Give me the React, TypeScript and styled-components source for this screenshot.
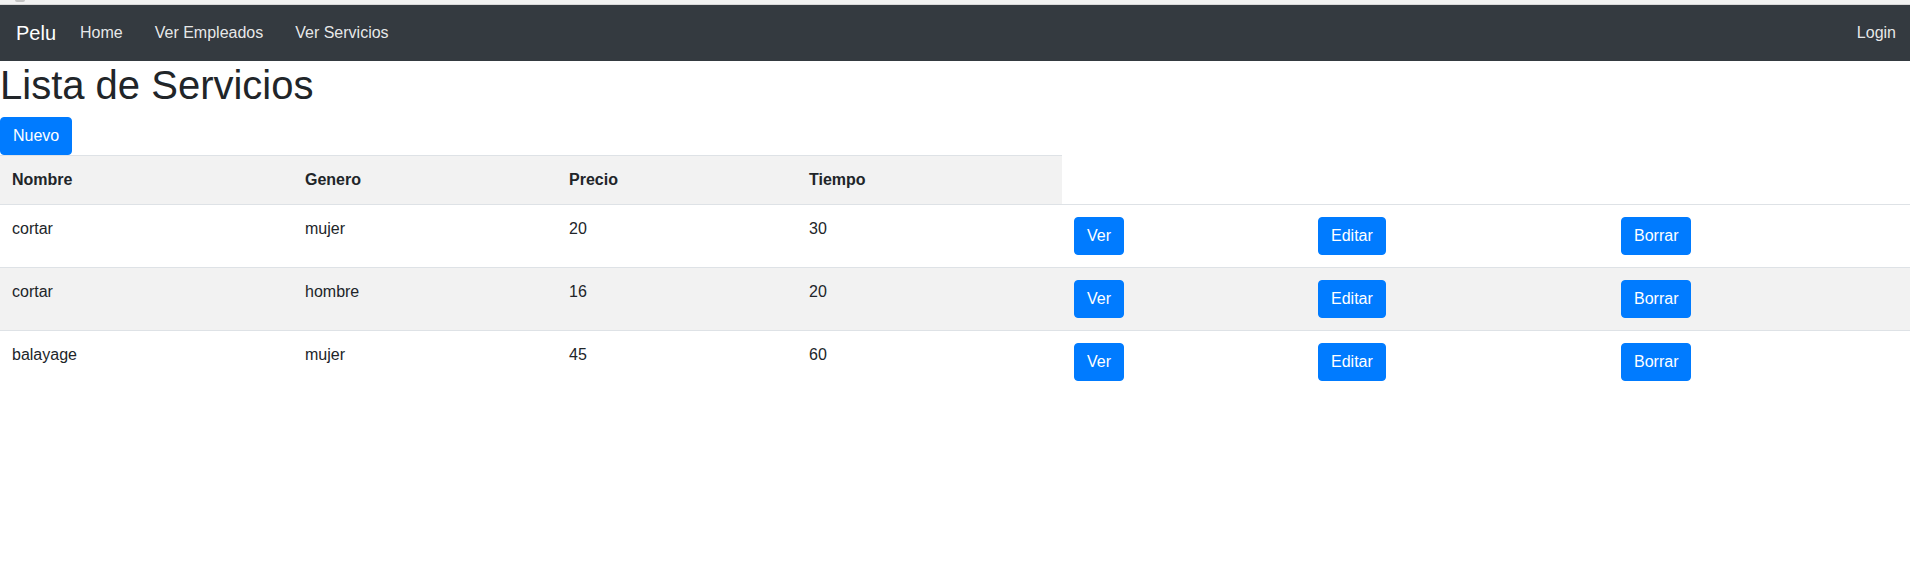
import React from "react";
import styled, { createGlobalStyle } from "styled-components";

const GlobalStyle = createGlobalStyle`
  html, body {
    margin: 0;
    padding: 0;
    background: #ffffff;
  }
  body {
    font-family: "Liberation Sans", Arial, Helvetica, sans-serif;
    font-size: 16px;
    line-height: 1.5;
    color: #212529;
  }
  * { box-sizing: border-box; }
`;

const TopStrip = styled.div`
  height: 5px;
  background: #f1f1f1;
  border-bottom: 1px solid #d8d8d8;
  display: flex;
  align-items: flex-start;
  padding-left: 15px;
`;

const StripMark = styled.span`
  display: block;
  width: 10px;
  height: 2px;
  background: #c4c4c4;
  border-radius: 0 0 4px 4px;
`;

const Navbar = styled.nav`
  display: flex;
  align-items: center;
  height: 56px;
  padding: 8px 14px 8px 16px;
  background: #343a40;
`;

const Brand = styled.a`
  display: inline-block;
  padding: 5px 0;
  margin-right: 16px;
  font-size: 20px;
  line-height: 30px;
  color: #ffffff;
  text-decoration: none;
  white-space: nowrap;
`;

const NavList = styled.ul<{ $right?: boolean }>`
  display: flex;
  gap: 16px;
  list-style: none;
  margin: 0;
  margin-left: ${(p) => (p.$right ? "auto" : "0")};
  padding: 0;
`;

const NavLink = styled.a<{ $last?: boolean }>`
  display: block;
  padding: ${(p) => (p.$last ? "8px 0 8px 8px" : "8px")};
  font-size: 16px;
  line-height: 24px;
  color: rgba(255, 255, 255, 0.9);
  text-decoration: none;
  white-space: nowrap;
`;

const Title = styled.h1`
  margin: 0 0 8px;
  font-size: 40px;
  font-weight: 400;
  line-height: 1.2;
  color: #212529;
`;

const Button = styled.button`
  display: inline-block;
  padding: 6px 12px;
  font-family: inherit;
  font-size: 16px;
  line-height: 24px;
  color: #ffffff;
  background: #007bff;
  border: 1px solid #007bff;
  border-radius: 4px;
  cursor: pointer;
  white-space: nowrap;
`;

const Toolbar = styled.div`
  display: block;
  height: 38px;
`;

const Table = styled.table`
  width: 100%;
  table-layout: fixed;
  border-collapse: collapse;
  color: #212529;
`;

const HeadCell = styled.th`
  padding: 12px;
  text-align: left;
  vertical-align: top;
  font-weight: 700;
  line-height: 24px;
  background: #f2f2f2;
  border-top: 1px solid #dee2e6;
`;

const Row = styled.tr<{ $striped?: boolean }>`
  background: ${(p) => (p.$striped ? "#f2f2f2" : "transparent")};
`;

const Cell = styled.td`
  padding: 12px;
  vertical-align: top;
  line-height: 24px;
  border-top: 1px solid #dee2e6;
`;

const columns = [293, 264, 240, 265, 244, 303, 301];

const servicios = [
  { nombre: "cortar", genero: "mujer", precio: 20, tiempo: 30 },
  { nombre: "cortar", genero: "hombre", precio: 16, tiempo: 20 },
  { nombre: "balayage", genero: "mujer", precio: 45, tiempo: 60 },
];

export default function App() {
  return (
    <>
      <GlobalStyle />
      <TopStrip>
        <StripMark />
      </TopStrip>
      <Navbar>
        <Brand href="#">Pelu</Brand>
        <NavList>
          <li><NavLink href="#">Home</NavLink></li>
          <li><NavLink href="#">Ver Empleados</NavLink></li>
          <li><NavLink href="#">Ver Servicios</NavLink></li>
        </NavList>
        <NavList $right>
          <li><NavLink href="#" $last>Login</NavLink></li>
        </NavList>
      </Navbar>
      <Title>Lista de Servicios</Title>
      <Toolbar>
        <Button>Nuevo</Button>
      </Toolbar>
      <Table>
        <colgroup>
          {columns.map((w, i) => (
            <col key={i} style={{ width: w }} />
          ))}
        </colgroup>
        <thead>
          <tr>
            <HeadCell>Nombre</HeadCell>
            <HeadCell>Genero</HeadCell>
            <HeadCell>Precio</HeadCell>
            <HeadCell>Tiempo</HeadCell>
          </tr>
        </thead>
        <tbody>
          {servicios.map((s, i) => (
            <Row key={i} $striped={i % 2 === 1}>
              <Cell>{s.nombre}</Cell>
              <Cell>{s.genero}</Cell>
              <Cell>{s.precio}</Cell>
              <Cell>{s.tiempo}</Cell>
              <Cell><Button>Ver</Button></Cell>
              <Cell><Button>Editar</Button></Cell>
              <Cell><Button>Borrar</Button></Cell>
            </Row>
          ))}
        </tbody>
      </Table>
    </>
  );
}
